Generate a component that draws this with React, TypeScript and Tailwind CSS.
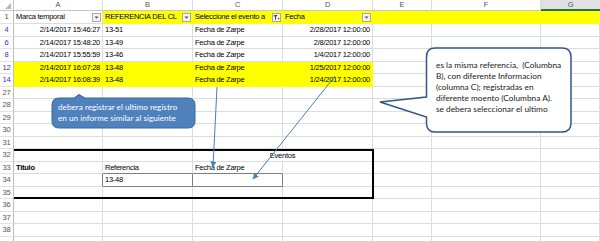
import clsx from "clsx";
import { twMerge } from "tailwind-merge";
import type { ReactNode } from "react";

const YELLOW = "bg-[#ffff00] border-[#ffff00]";

function Cell({
  w,
  className,
  children,
}: {
  w: string;
  className?: string;
  children?: ReactNode;
}) {
  return (
    <div
      className={twMerge(
        "flex h-full shrink-0 items-center overflow-hidden whitespace-nowrap border-r border-b border-[#dadcdd] px-[2px]",
        w,
        className
      )}
    >
      {children}
    </div>
  );
}

function RowHead({ n, blue, className }: { n: string; blue?: boolean; className?: string }) {
  return (
    <div
      className={clsx(
        "flex w-[14px] shrink-0 items-center justify-center border-r border-b border-r-[#bdbdbd] border-b-[#e3e3e3]",
        blue ? "text-[#3434c8]" : "text-[#555]",
        className
      )}
    >
      {n}
    </div>
  );
}

function FilterBtn({ active }: { active?: boolean }) {
  return (
    <div className="ml-auto flex h-[9px] w-[9px] shrink-0 items-center justify-center border border-[#a9a9a9] bg-[#f4f4f4]">
      <svg width="7" height="7" viewBox="0 0 7 7">
        {active ? (
          <>
            <path d="M0.5 1 H4.5 L3 3 V5.5 L2 6 V3 Z" fill="#444" />
            <path d="M4.6 4 H6.8 L5.7 5.4 Z" fill="#444" />
          </>
        ) : (
          <path d="M1.5 2.5 H5.5 L3.5 4.7 Z" fill="#555" />
        )}
      </svg>
    </div>
  );
}

type DataRow = { n: string; h: string; a: string; b: string; c: string; d: string; hi?: boolean };

const data: DataRow[] = [
  { n: "4", h: "h-[13px]", a: "2/14/2017 15:46:27", b: "13-51", c: "Fecha de Zarpe", d: "2/28/2017 12:00:00" },
  { n: "6", h: "h-[12px]", a: "2/14/2017 15:48:20", b: "13-49", c: "Fecha de Zarpe", d: "2/8/2017 12:00:00" },
  { n: "8", h: "h-[13px]", a: "2/14/2017 15:55:59", b: "13-46", c: "Fecha de Zarpe", d: "1/4/2017 12:00:00" },
  { n: "12", h: "h-[12px]", a: "2/14/2017 16:07:28", b: "13-48", c: "Fecha de Zarpe", d: "1/25/2017 12:00:00", hi: true },
  { n: "14", h: "h-[13px]", a: "2/14/2017 16:08:39", b: "13-48", c: "Fecha de Zarpe", d: "1/24/2017 12:00:00", hi: true },
];

const empty1 = [
  { n: "27", h: "h-[12px]" },
  { n: "28", h: "h-[13px]" },
  { n: "29", h: "h-[12px]" },
  { n: "30", h: "h-[13px]" },
  { n: "31", h: "h-[12px]" },
];

const boxSide = [
  { n: "32", h: "h-[13px]" },
  { n: "33", h: "h-[12px]" },
  { n: "34", h: "h-[13px]" },
  { n: "35", h: "h-[12px]" },
];

// last row only peeks in at the bottom edge, so it gets no number
const empty2 = [
  { n: "36", h: "h-[13px]" },
  { n: "37", h: "h-[12px]" },
  { n: "38", h: "h-[13px]" },
  { n: "", h: "h-[12px]" },
];

function EmptyRow({ n, h }: { n: string; h: string }) {
  return (
    <div className={clsx("flex", h)}>
      <RowHead n={n} />
      <Cell w="w-[89px]" />
      <Cell w="w-[90px]" />
      <Cell w="w-[90px]" />
      <Cell w="w-[90px]" />
      <Cell w="w-[59px]" />
      <Cell w="w-[109px]" />
      <Cell w="flex-1" />
    </div>
  );
}

export default function App() {
  const letters = [
    { l: "A", w: "w-[89px]" },
    { l: "B", w: "w-[90px]" },
    { l: "C", w: "w-[90px]" },
    { l: "D", w: "w-[90px]" },
    { l: "E", w: "w-[59px]" },
    { l: "F", w: "w-[109px]" },
  ];

  return (
    <div className="relative h-[241px] w-[600px] overflow-hidden bg-white font-['Liberation_Sans',Arial,sans-serif] text-[7.5px] leading-none tracking-[-0.25px] text-black">
      {/* Column letters */}
      <div className="flex h-[11px] text-[#555]">
        <div className="flex w-[14px] shrink-0 items-end justify-end border-r border-b border-[#c6c6c6] pb-[1px] pr-[1px]">
          <svg width="7" height="6" viewBox="0 0 7 6">
            <path d="M6 0 V6 H0 Z" fill="#b8b8b8" />
          </svg>
        </div>
        {letters.map((c) => (
          <div
            key={c.l}
            className={clsx(
              "flex shrink-0 items-center justify-center border-r border-b border-r-[#dcdcdc] border-b-[#c6c6c6]",
              c.w
            )}
          >
            {c.l}
          </div>
        ))}
        <div className="flex flex-1 items-center justify-center border-b-2 border-[#217346] bg-[#e1e1e1] text-[#217346]">
          G
        </div>
      </div>

      {/* Row 1: filter headers */}
      <div className="flex h-[13px]">
        <RowHead n="1" />
        <Cell w="w-[89px]" className="pr-[1px]">
          <span className="min-w-0 flex-1 overflow-hidden">Marca temporal</span>
          <FilterBtn />
        </Cell>
        <Cell w="w-[90px]" className={clsx(YELLOW, "pr-[1px]")}>
          <span className="min-w-0 flex-1 overflow-hidden">REFERENCIA DEL CL</span>
          <FilterBtn />
        </Cell>
        <Cell w="w-[90px]" className={clsx(YELLOW, "pr-[1px]")}>
          <span className="min-w-0 flex-1 overflow-hidden">Seleccione el evento a</span>
          <FilterBtn active />
        </Cell>
        <Cell w="w-[90px]" className={clsx(YELLOW, "pr-[1px]")}>
          <span className="min-w-0 flex-1 overflow-hidden">Fecha</span>
          <FilterBtn />
        </Cell>
        <Cell w="w-[59px]" className={YELLOW} />
        <Cell w="w-[109px]" className={YELLOW} />
        <Cell w="flex-1" className={YELLOW} />
      </div>

      {/* Filtered data */}
      {data.map((r) => (
        <div key={r.n} className={clsx("flex", r.h)}>
          <RowHead n={r.n} blue />
          <Cell w="w-[89px]" className={clsx("justify-end", r.hi && YELLOW)}>
            {r.a}
          </Cell>
          <Cell w="w-[90px]" className={clsx(r.hi && YELLOW)}>
            {r.b}
          </Cell>
          <Cell w="w-[90px]" className={clsx(r.hi && YELLOW)}>
            {r.c}
          </Cell>
          <Cell w="w-[90px]" className={clsx("justify-end", r.hi && YELLOW)}>
            {r.d}
          </Cell>
          <Cell w="w-[59px]" />
          <Cell w="w-[109px]" />
          <Cell w="flex-1" />
        </div>
      ))}

      {empty1.map((r) => (
        <EmptyRow key={r.n} n={r.n} h={r.h} />
      ))}

      {/* Report box */}
      <div className="flex">
        <div className="flex w-[14px] shrink-0 flex-col">
          {boxSide.map((r) => (
            <RowHead key={r.n} n={r.n} className={r.h} />
          ))}
        </div>
        <div className="flex w-[360px] shrink-0 flex-col border-y-2 border-r-2 border-black">
          <div className="flex h-[11px]">
            <Cell w="w-[89px]" />
            <Cell w="w-[90px]" />
            <Cell w="w-[179px]" className="justify-center border-r-0">
              Eventos
            </Cell>
          </div>
          <div className="flex h-[12px]">
            <Cell w="w-[89px]" className="font-bold">
              Titulo
            </Cell>
            <Cell w="w-[90px]" className="border-b-[#7f7f7f]">
              Referencia
            </Cell>
            <Cell w="w-[90px]" className="border-b-[#7f7f7f]">
              Fecha de Zarpe
            </Cell>
            <Cell w="w-[89px]" className="border-r-0" />
          </div>
          <div className="flex h-[13px]">
            <Cell w="w-[89px]" className="border-r-[#7f7f7f]" />
            <Cell w="w-[90px]" className="border-r-[#7f7f7f] border-b-[#7f7f7f]">
              13-48
            </Cell>
            <Cell w="w-[90px]" className="border-r-[#7f7f7f] border-b-[#7f7f7f]" />
            <Cell w="w-[89px]" className="border-r-0" />
          </div>
          <div className="flex h-[10px]">
            <Cell w="w-[89px]" className="border-b-0" />
            <Cell w="w-[90px]" className="border-b-0" />
            <Cell w="w-[90px]" className="border-b-0" />
            <Cell w="w-[89px]" className="border-r-0 border-b-0" />
          </div>
        </div>
        <div className="flex flex-1 flex-col">
          {boxSide.map((r) => (
            <div key={r.n} className={clsx("flex", r.h)}>
              <Cell w="w-[58px]" />
              <Cell w="w-[109px]" />
              <Cell w="flex-1" />
            </div>
          ))}
        </div>
      </div>

      {empty2.map((r, i) => (
        <EmptyRow key={i} n={r.n} h={r.h} />
      ))}

      {/* Shapes drawn over the sheet */}
      <svg className="pointer-events-none absolute inset-0" width="600" height="241" viewBox="0 0 600 241">
        <defs>
          <marker id="ah" markerWidth="6" markerHeight="6" refX="5.5" refY="3" orient="auto">
            <path d="M0 0 L6 3 L0 6 Z" fill="#4a7ebb" />
          </marker>
        </defs>
        <line x1="217" y1="87" x2="213" y2="167" stroke="#4a7ebb" strokeWidth="1" markerEnd="url(#ah)" />
        <line x1="335" y1="76" x2="253" y2="179" stroke="#4a7ebb" strokeWidth="1" markerEnd="url(#ah)" />
        <path
          d="M59 98 H74 L79 94.5 L85 98 H188 Q195 98 195 105 V121 Q195 128 188 128 H59 Q52 128 52 121 V105 Q52 98 59 98 Z"
          fill="#4f81bd"
          stroke="#3a669c"
          strokeWidth="1"
        />
        <path
          d="M435 48 H562 Q571 48 571 57 V123 Q571 132 562 132 H435 Q426.5 132 426.5 123 V117 L380 102 L426.5 97 V57 Q426.5 48 435 48 Z"
          fill="#ffffff"
          stroke="#30568a"
          strokeWidth="1.5"
        />
      </svg>

      <div className="pointer-events-none absolute left-[58px] top-[102px] whitespace-pre font-['Lato',sans-serif] text-[8.2px] leading-[11px] tracking-normal text-white">
        {"debera registrar el ultimo registro\nen un informe similar al siguiente"}
      </div>
      <div className="pointer-events-none absolute left-[436px] top-[59.5px] whitespace-pre font-['Lato',sans-serif] text-[8.3px] leading-[11px] tracking-normal text-[#1a1a1a]">
        {"es la misma referencia,  (Columbna\nB), con diferente Informacion\n(columna C); registradas en\ndiferente moento (Columbna A).\nse debera seleccionar el ultimo"}
      </div>
    </div>
  );
}
